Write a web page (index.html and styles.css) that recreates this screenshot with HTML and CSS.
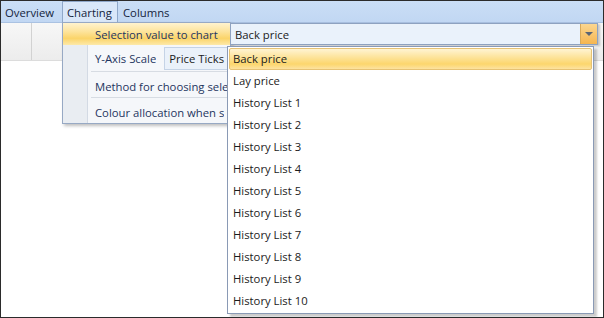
FILE: index.html
```html
<!DOCTYPE html>
<html lang="en">
<head>
  <meta charset="UTF-8">
  <title>Charting options</title>
  <link rel="stylesheet" href="styles.css">
</head>
<body>
  <div class="window">
    <div class="menubar">
      <span class="tab">Overview</span>
      <span class="tab active">Charting</span>
      <span class="tab">Columns</span>
    </div>
    <div class="toolbar">
      <div class="tool"></div>
      <div class="tool"></div>
      <div class="tool wide"></div>
    </div>
    <div class="canvas"></div>

    <!-- Charting menu -->
    <div class="menu">
      <div class="menu-row hot">
        <span class="gutter"></span>
        <span class="label">Selection value to chart</span>
      </div>
      <div class="menu-row tall">
        <span class="gutter"></span>
        <span class="label short">Y-Axis Scale</span>
        <span class="mini-combo">Price Ticks</span>
      </div>
      <div class="menu-sep"><span class="gutter"></span><span class="rule"></span></div>
      <div class="menu-row">
        <span class="gutter"></span>
        <span class="label">Method for choosing sele</span>
      </div>
      <div class="menu-sep"><span class="gutter"></span><span class="rule"></span></div>
      <div class="menu-row">
        <span class="gutter"></span>
        <span class="label">Colour allocation when s</span>
      </div>
    </div>

    <div class="combo">
      <span class="combo-text">Back price</span>
      <span class="combo-btn"><span class="arrow"></span></span>
    </div>

    <div class="list">
      <div class="item selected">Back price</div>
      <div class="item">Lay price</div>
      <div class="item">History List 1</div>
      <div class="item">History List 2</div>
      <div class="item">History List 3</div>
      <div class="item">History List 4</div>
      <div class="item">History List 5</div>
      <div class="item">History List 6</div>
      <div class="item">History List 7</div>
      <div class="item">History List 8</div>
      <div class="item">History List 9</div>
      <div class="item">History List 10</div>
    </div>
  </div>
</body>
</html>
```

FILE: styles.css
```css
body {
  margin: 0;
  font-family: 'Open Sans', 'Noto Sans', sans-serif;
  font-size: 11.3px;
  color: #1b1b1b;
}

.window {
  position: relative;
  width: 604px;
  height: 318px;
  box-sizing: border-box;
  border: 1px solid #2b2b2b;
  background: #fff;
  overflow: hidden;
  display: flex;
  flex-direction: column;
}

.menubar {
  height: 21px;
  display: flex;
  align-items: stretch;
  background: linear-gradient(#cadef6, #c1d7f3);
  border-bottom: 1px solid #aac2e2;
}

.tab {
  display: flex;
  align-items: center;
  padding: 0 4px;
  color: #14243c;
  border: 1px solid transparent;
  border-bottom: none;
}

.tab:first-child {
  width: 50px;
  padding-left: 3px;
}

.tab.active {
  width: 46px;
  margin-left: 2px;
  background: #d9e7f9;
  border-color: #8fa8ca;
}

.toolbar {
  height: 37px;
  display: flex;
  background: linear-gradient(#f7f7f7, #ececec);
  border-bottom: 1px solid #dcdcdc;
}

.tool {
  width: 30px;
  border-right: 1px solid #d2d2d2;
}

.tool.wide {
  flex: 1;
  border-right: none;
}

.canvas {
  flex: 1;
}

/* dropdown menu */
.menu {
  position: absolute;
  left: 61px;
  top: 21px;
  width: 167px;
  height: 100px;
  background: #f5f7fa;
  border: 1px solid #97a9c4;
  box-shadow: 2px 2px 3px rgba(0, 0, 0, 0.25);
  display: flex;
  flex-direction: column;
  overflow: hidden;
}

.menu-row {
  height: 22px;
  display: flex;
  align-items: center;
  color: #1e3560;
  white-space: nowrap;
}

.menu-row.tall {
  height: 26px;
}

.gutter {
  width: 24px;
  align-self: stretch;
  background: #e9edf2;
  border-right: 1px solid #d3dae4;
  flex-shrink: 0;
}

.menu-row .label {
  padding-left: 7px;
  overflow: hidden;
}

.menu-row.hot {
  background: linear-gradient(#fff3cf, #fde39a 40%, #fbd469 70%, #fde9a9);
}

.menu-row.hot .gutter {
  background: transparent;
  border-right-color: transparent;
}

.mini-combo {
  margin-left: 8px;
  height: 21px;
  display: flex;
  align-items: center;
  padding-left: 4px;
  flex: 1;
  background: #eaf1fa;
  border: 1px solid #c5d3e6;
  border-right: none;
  color: #1b1b1b;
  overflow: hidden;
}

.menu-sep {
  height: 4px;
  display: flex;
}

.menu-sep .rule {
  flex: 1;
  margin: 0 0 0 3px;
  height: 1px;
  background: #d7dce3;
}

/* combo box beside the hot item */
.combo {
  position: absolute;
  left: 229px;
  top: 22px;
  width: 368px;
  height: 22px;
  box-sizing: border-box;
  background: #eaf2fb;
  border: 1px solid #8ea2c0;
  display: flex;
  align-items: center;
  box-shadow: 2px 1px 2px rgba(0, 0, 0, 0.2);
}

.combo-text {
  flex: 1;
  padding-left: 4px;
}

.combo-btn {
  width: 16px;
  height: 20px;
  display: flex;
  align-items: center;
  justify-content: center;
  background: linear-gradient(#fbd690, #f6b650);
  border-left: 1px solid #d8a95a;
}

.arrow {
  width: 0;
  height: 0;
  border-left: 4px solid transparent;
  border-right: 4px solid transparent;
  border-top: 4px solid #5a6475;
}

/* drop-down list */
.list {
  position: absolute;
  left: 226px;
  top: 45px;
  width: 367px;
  height: 268px;
  box-sizing: border-box;
  padding: 1px;
  background: #fff;
  border: 1px solid #8a9ab5;
  box-shadow: 3px 3px 2px rgba(0, 0, 0, 0.2);
}

.item {
  height: 22px;
  line-height: 21px;
  padding-left: 4px;
  box-sizing: border-box;
  color: #1b1b1b;
}

.item.selected {
  background: linear-gradient(#fff4d3, #fde49c 40%, #fcd66d 75%, #fde3a0);
  border: 1px solid #e6c274;
  border-radius: 2px;
  line-height: 19px;
  padding-left: 3px;
}
```
